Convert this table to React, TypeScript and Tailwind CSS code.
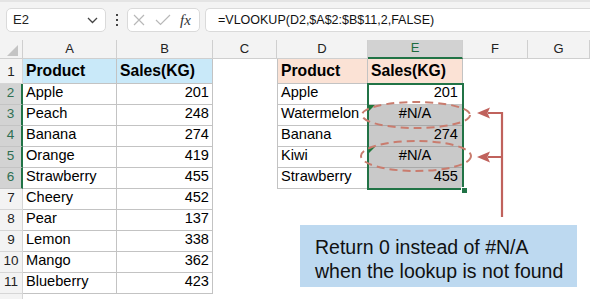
import React from "react";

const left: [string, number][] = [
  ["Apple", 201],
  ["Peach", 248],
  ["Banana", 274],
  ["Orange", 419],
  ["Strawberry", 455],
  ["Cheery", 452],
  ["Pear", 137],
  ["Lemon", 338],
  ["Mango", 362],
  ["Blueberry", 423],
];
const right: [string, string][] = [
  ["Apple", "201"],
  ["Watermelon", "#N/A"],
  ["Banana", "274"],
  ["Kiwi", "#N/A"],
  ["Strawberry", "455"],
];

const cols = ["A", "B", "C", "D", "E", "F", "G"];

export default function App() {
  const rows = Array.from({ length: 11 }, (_, i) => i);
  return (
    <div className="relative w-[590px] h-[299px] overflow-hidden bg-white font-['Liberation_Sans',Arial,sans-serif] text-black">
      {/* toolbar */}
      <div className="h-[40px] bg-[#f3f3f3] border-t-[2px] border-[#e4e4e4] flex items-start pt-[6px] pl-[6px]">
        <div className="w-[100px] h-[24px] bg-white border border-[#dadada] rounded-[5px] flex items-center pl-[6px] pr-[6px] justify-between">
          <span className="text-[13px] text-[#222]">E2</span>
          <svg width="11" height="7" viewBox="0 0 11 7" className="mr-[1px]">
            <path d="M1 1 L5.5 5.5 L10 1" fill="none" stroke="#444" strokeWidth="1.3" />
          </svg>
        </div>
        <div className="w-[21px] h-[24px] flex flex-col items-center justify-center gap-[3px]">
          <div className="w-[2px] h-[2px] bg-[#444]" />
          <div className="w-[2px] h-[2px] bg-[#444]" />
          <div className="w-[2px] h-[2px] bg-[#444]" />
        </div>
        <div className="w-[73px] h-[24px] bg-white border border-[#dadada] rounded-[5px] flex items-center pl-[5px]">
          <svg width="12" height="12" viewBox="0 0 12 12">
            <path d="M1 1 L11 11 M11 1 L1 11" stroke="#b8b8b8" strokeWidth="1.2" />
          </svg>
          <svg width="16" height="12" viewBox="0 0 16 12" className="ml-[10px]">
            <path d="M1 6 L5.5 10.5 L15 1" fill="none" stroke="#b8b8b8" strokeWidth="1.2" />
          </svg>
          <span className="ml-[9px] text-[15px] italic font-['Liberation_Serif',serif] text-[#333] leading-none">fx</span>
        </div>
        <div className="ml-[5px] flex-1 h-[24px] bg-white border border-[#dadada] border-r-0 rounded-l-[5px] flex items-center pl-[12px]">
          <span className="text-[12.5px] text-[#111] whitespace-nowrap">=VLOOKUP(D2,$A$2:$B$11,2,FALSE)</span>
        </div>
      </div>

      {/* sheet */}
      <div className="grid grid-cols-[23px_94px_96px_64px_91px_95px_65px_1fr] grid-rows-[19px_25px_repeat(11,21px)]">
        {/* column headers */}
        <div className="bg-[#f3f3f3] border-r border-b border-[#cfcfcf] relative">
          <svg width="23" height="19" viewBox="0 0 23 19" className="absolute inset-0">
            <path d="M7 16 L18 5 L18 16 Z" fill="#c4c4c4" />
          </svg>
        </div>
        {cols.map((c) =>
          c === "E" ? (
            <div key={c} className="bg-[#d2d2d2] border-r border-[#cfcfcf] border-b-2 border-b-[#217346] flex items-end justify-center text-[13px] text-[#1d6b40]">
              {c}
            </div>
          ) : (
            <div key={c} className="bg-[#f3f3f3] border-r border-b border-[#cfcfcf] flex items-end justify-center text-[13px] text-[#222]">
              {c}
            </div>
          )
        )}

        {rows.map((r) => {
          const rowNum = r + 1;
          const sel = rowNum >= 2 && rowNum <= 6;
          const cells: React.ReactNode[] = [];
          cells.push(
            sel ? (
              <div key="h" className="bg-[#d3d3d3] border-r-2 border-r-[#217346] border-b border-b-[#c4c4c4] flex items-end pb-[1px] justify-center text-[13.5px] text-[#2f6f52]">
                {rowNum}
              </div>
            ) : (
              <div key="h" className="bg-[#f3f3f3] border-r border-b border-[#d6d6d6] flex items-end pb-[1px] justify-center text-[13.5px] text-[#222]">
                {rowNum}
              </div>
            )
          );
          // A, B
          if (rowNum === 1) {
            cells.push(
              <div key="a" className="bg-[#c9e9f9] border-r border-b border-[#c3c3c3] flex items-end pl-[3px] text-[15.7px] font-bold">
                Product
              </div>,
              <div key="b" className="bg-[#c9e9f9] border-r border-b border-[#c3c3c3] flex items-end pl-[3px] text-[15.7px] font-bold">
                Sales(KG)
              </div>
            );
          } else {
            const [n, v] = left[rowNum - 2];
            cells.push(
              <div key="a" className="border-r border-b border-[#c3c3c3] flex items-end pl-[3px] text-[14.6px] whitespace-nowrap">
                {n}
              </div>,
              <div key="b" className="border-r border-b border-[#c3c3c3] flex items-end justify-end pr-[3px] text-[14.6px]">
                {v}
              </div>
            );
          }
          // C
          cells.push(<div key="c" />);
          // D, E
          if (rowNum === 1) {
            cells.push(
              <div key="d" className="bg-[#fbe2d5] border-l border-r border-b border-[#c3c3c3] flex items-end pl-[3px] text-[15.7px] font-bold">
                Product
              </div>,
              <div key="e" className="bg-[#fbe2d5] border-r border-b border-[#c3c3c3] flex items-end pl-[3px] text-[15.7px] font-bold">
                Sales(KG)
              </div>
            );
          } else if (rowNum <= 6) {
            const [n, v] = right[rowNum - 2];
            const isErr = v === "#N/A";
            cells.push(
              <div key="d" className="border-l border-r border-b border-[#c3c3c3] flex items-end pl-[3px] text-[14.6px] whitespace-nowrap">
                {n}
              </div>
            );
            if (rowNum === 2) {
              cells.push(
                <div key="e" className="border-r border-b border-[#c3c3c3] flex items-end justify-end pr-[4px] text-[14.6px]">
                  {v}
                </div>
              );
            } else {
              cells.push(
                <div
                  key="e"
                  className={
                    isErr
                      ? "relative bg-[#c9c9c9] border-r border-b border-r-white border-b-[#a9a9a9] flex items-end justify-center text-[14.6px]"
                      : "relative bg-[#c9c9c9] border-r border-b border-r-white border-b-[#a9a9a9] flex items-end justify-end pr-[4px] text-[14.6px]"
                  }
                >
                  {isErr && (
                    <svg width="6" height="6" viewBox="0 0 6 6" className="absolute left-[1px] top-0">
                      <path d="M0 0 L6 0 L0 6 Z" fill="#1f7a3c" />
                    </svg>
                  )}
                  {v}
                </div>
              );
            }
          } else {
            cells.push(<div key="d" />, <div key="e" />);
          }
          cells.push(<div key="f" />, <div key="g" />);
          return <React.Fragment key={r}>{cells}</React.Fragment>;
        })}
        <div className="bg-[#f3f3f3] border-r border-[#d6d6d6]" />
      </div>

      {/* selection border */}
      <div className="absolute left-[367px] top-[83px] w-[97px] h-[107px] border-2 border-[#217346] pointer-events-none" />
      <div className="absolute left-[461px] top-[187px] w-[7px] h-[7px] bg-[#217346] border border-white pointer-events-none" />

      {/* annotations */}
      <svg width="590" height="299" viewBox="0 0 590 299" className="absolute inset-0 pointer-events-none">
        <ellipse cx="416" cy="115" rx="54" ry="13" fill="none" stroke="#c97c6e" strokeWidth="2" strokeDasharray="8 5" />
        <ellipse cx="416" cy="156" rx="55" ry="15" fill="none" stroke="#c97c6e" strokeWidth="2" strokeDasharray="8 5" />
        <path d="M502 112 L502 217 M488 113 L502 113 M488 157 L502 157" stroke="#c0625c" strokeWidth="2.2" fill="none" />
        <path d="M477 113 L490 107.5 L487.5 113 L490 118.5 Z" fill="#c0625c" />
        <path d="M477 157 L490 151.5 L487.5 157 L490 162.5 Z" fill="#c0625c" />
      </svg>

      {/* callout */}
      <div className="absolute left-[300px] top-[225px] w-[277px] h-[62px] bg-[#bdd9f0] flex flex-col justify-start pt-[11px] pl-[15px] text-[19.5px] leading-[23.5px] text-[#111] whitespace-nowrap">
        <span>Return 0 instead of #N/A</span>
        <span>when the lookup is not found</span>
      </div>
    </div>
  );
}
